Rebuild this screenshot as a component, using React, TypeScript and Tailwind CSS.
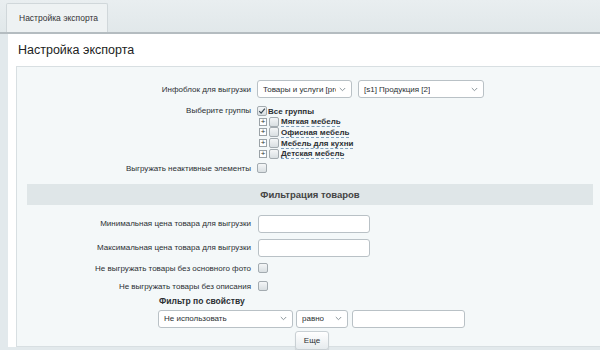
import type { ReactNode } from "react";

const Checkbox = ({ checked = false }: { checked?: boolean }) => (
    <span className="inline-flex h-[10px] w-[10px] shrink-0 items-center justify-center rounded-[2px] border border-[#a3abb0] bg-gradient-to-b from-[#f4f6f7] to-[#d9dfe2]">
        {checked && (
            <svg width="8" height="8" viewBox="0 0 8 8">
                <path d="M1.2 4.2 L3.1 6.1 L6.9 1.6" fill="none" stroke="#3b4a55" strokeWidth="1.2" />
            </svg>
        )}
    </span>
);

const Select = ({ value, width }: { value: string; width: string }) => (
    <div
        className={`flex h-[18px] items-center justify-between overflow-hidden rounded-[3px] border border-[#b9c1c6] bg-white pl-[5px] pr-[5px] ${width}`}
    >
        <span className="overflow-hidden whitespace-nowrap">{value}</span>
        <svg width="7" height="5" viewBox="0 0 7 5" className="ml-[3px] shrink-0">
            <path d="M0.8 1 L3.5 3.7 L6.2 1" fill="none" stroke="#8b959b" strokeWidth="1" />
        </svg>
    </div>
);

const Row = ({ label, children, className = "" }: { label: string; children: ReactNode; className?: string }) => (
    <div className={`flex items-center ${className}`}>
        <div className="w-[240px] pr-[6px] text-right">{label}</div>
        <div className="flex items-center gap-[6px]">{children}</div>
    </div>
);

const groups = ["Мягкая мебель", "Офисная мебель", "Мебель для кухни", "Детская мебель"];

export default function App() {
    return (
        <div
            className="h-[350px] w-[600px] overflow-hidden bg-[#e2e9ec] text-[8px] leading-[11px] text-[#2b2f33]"
            style={{ fontFamily: '"Liberation Sans", Arial, sans-serif' }}
        >
            {/* tabs */}
            <div className="flex h-[34px] items-end border-b-2 border-[#b4bcc0] bg-gradient-to-b from-[#e9eef0] to-[#e1e8ea] pl-[6px]">
                <div className="flex h-[29px] w-[102px] items-center rounded-t-[2px] border border-b-0 border-[#d0d7da] bg-[#eef2f3] pl-[12px] text-[8.5px] text-[#333]">
                    Настройка экспорта
                </div>
            </div>

            <div className="ml-[8px] bg-white">
                <div className="flex h-[32px] items-center pl-[10px] text-[12.5px] leading-none text-[#222]">
                    Настройка экспорта
                </div>

                <div className="ml-[8px] h-[281px] border-b border-l border-t border-[#d8dfe2] bg-[#f4f8f9] pt-[13px]">
                    <Row label="Инфоблок для выгрузки">
                        <Select value="Товары и услуги [products]" width="w-[95px]" />
                        <Select value="[s1] Продукция [2]" width="w-[126px]" />
                    </Row>

                    <div className="mt-[8px] flex">
                        <div className="w-[240px] pr-[6px] text-right leading-[10px]">Выберите группы</div>
                        <div className="flex flex-col">
                            <div className="flex h-[10px] items-center gap-[1px] font-bold">
                                <Checkbox checked />
                                <span>Все группы</span>
                            </div>
                            {groups.map((g) => (
                                <div key={g} className="ml-[2px] mt-[0.7px] flex h-[10px] items-center">
                                    <span className="mr-[2px] flex h-[8px] w-[8px] items-center justify-center border border-[#9aa2a7] bg-white text-[8px] leading-none text-[#333]">
                                        +
                                    </span>
                                    <Checkbox />
                                    <span className="ml-[2px] font-bold underline decoration-[#7fa0bd] decoration-dashed underline-offset-2">
                                        {g}
                                    </span>
                                </div>
                            ))}
                        </div>
                    </div>

                    <Row label="Выгружать неактивные элементы" className="mt-[4px]">
                        <Checkbox />
                    </Row>

                    <div className="ml-[10px] mt-[10px] flex h-[21px] w-[566px] items-center justify-center bg-[#dfe6e8] text-[9.5px] font-bold text-[#444]">
                        Фильтрация товаров
                    </div>

                    <Row label="Минимальная цена товара для выгрузки" className="mt-[10px]">
                        <div className="ml-[1px] h-[18px] w-[112px] rounded-[3px] border border-[#b9c1c6] bg-white" />
                    </Row>
                    <Row label="Максимальная цена товара для выгрузки" className="mt-[6px]">
                        <div className="ml-[1px] h-[18px] w-[112px] rounded-[3px] border border-[#b9c1c6] bg-white" />
                    </Row>
                    <Row label="Не выгружать товары без основного фото" className="mt-[6px]">
                        <div className="ml-[1px] flex">
                            <Checkbox />
                        </div>
                    </Row>
                    <Row label="Не выгружать товары без описания" className="mt-[7px]">
                        <div className="ml-[1px] flex">
                            <Checkbox />
                        </div>
                    </Row>

                    <div className="ml-[141px] mt-[4px]">
                        <div className="ml-[1px] text-[8.5px] font-bold">Фильтр по свойству</div>
                        <div className="mt-[3px] flex items-center gap-[3px]">
                            <Select value="Не использовать" width="w-[135px]" />
                            <Select value="равно" width="w-[52px]" />
                            <div className="ml-[1px] h-[18px] w-[113px] rounded-[3px] border border-[#b9c1c6] bg-white" />
                        </div>
                        <div className="ml-[137px] mt-[3px] flex h-[19px] w-[34px] items-center justify-center rounded-[3px] border border-[#c9d0d4] bg-gradient-to-b from-[#ffffff] to-[#e6ebee] shadow-[0_1px_1px_rgba(0,0,0,0.15)]">
                            Еще
                        </div>
                    </div>
                </div>
            </div>
        </div>
    );
}
